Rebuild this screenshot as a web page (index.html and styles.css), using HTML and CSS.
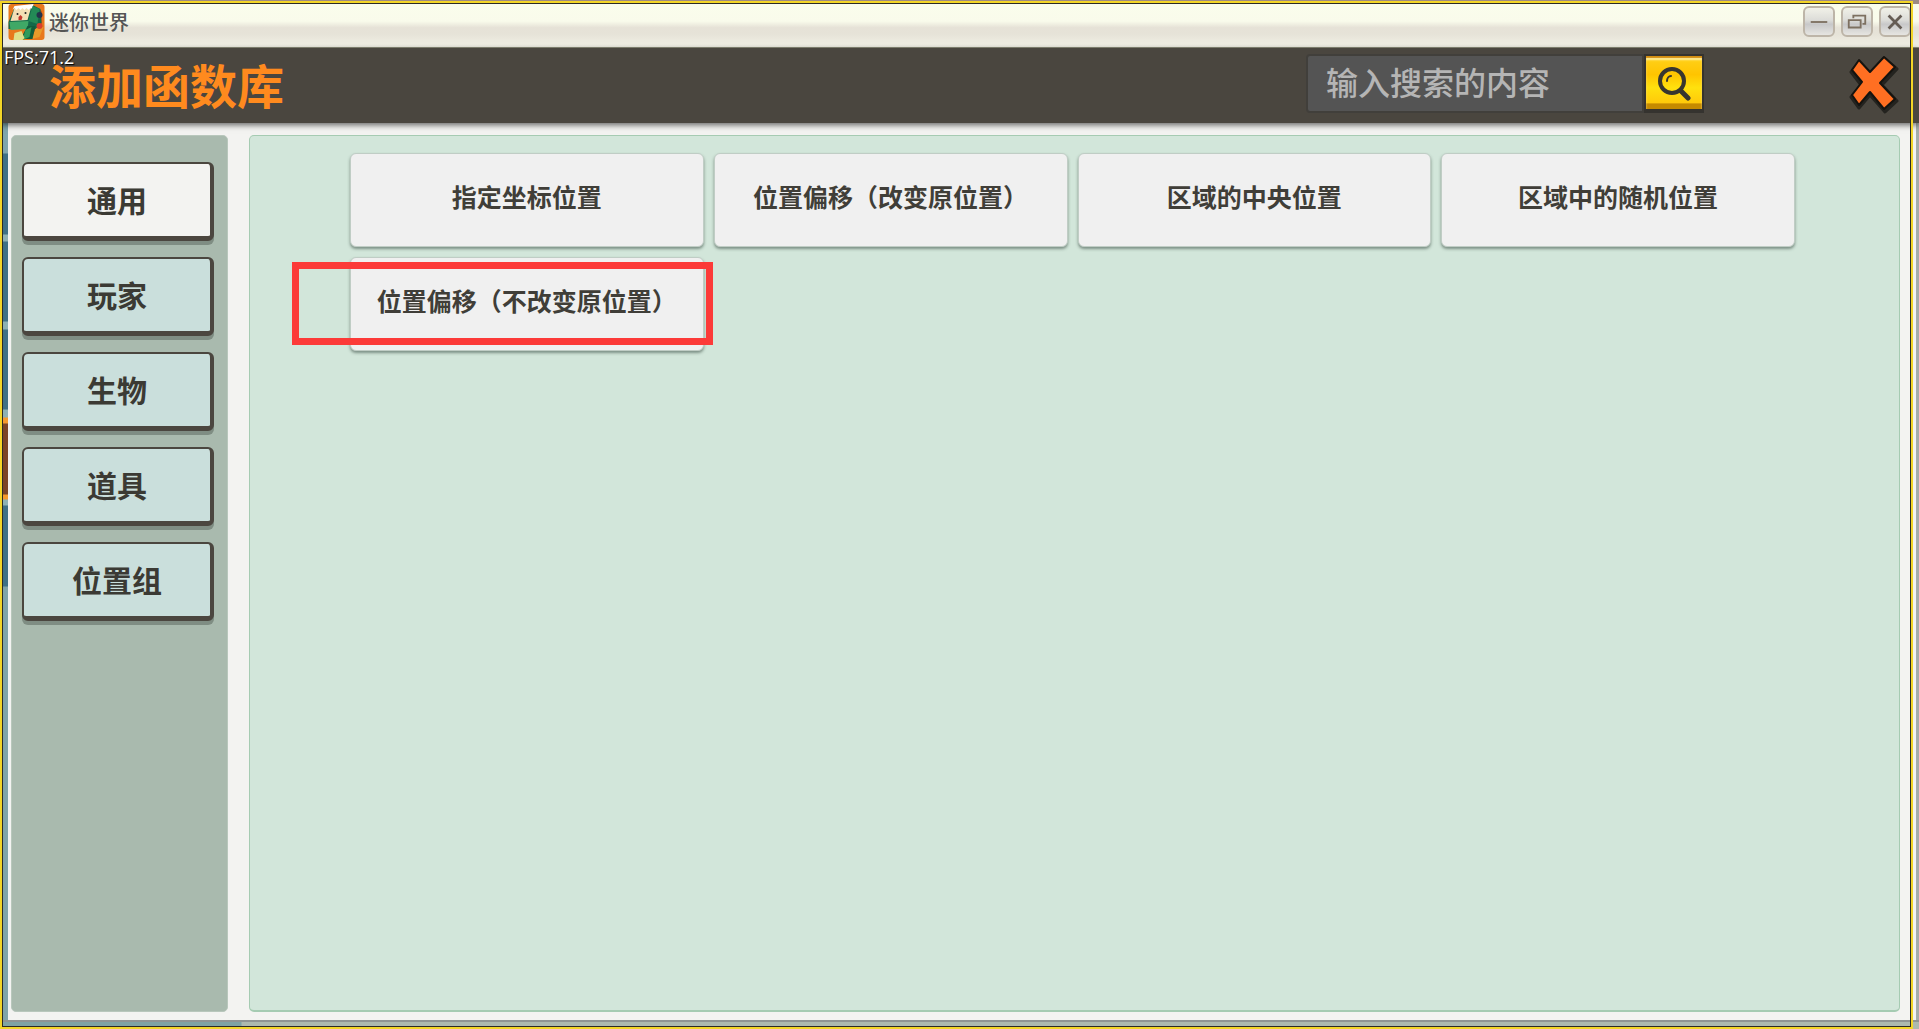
FILE: index.html
```html
<!DOCTYPE html>
<html lang="zh-CN">
<head>
<meta charset="UTF-8" />
<meta name="viewport" content="width=device-width, initial-scale=1.0"/>
<title>迷你世界</title>
<link rel="stylesheet" href="styles.css">
</head>
<body>
<div class="window">
  <div class="titlebar">
    <svg class="app-icon" viewBox="0 0 36 36" aria-hidden="true">
      <rect width="36" height="36" rx="3" fill="#e8781c"/>
      <path d="M24 2l9 5v18l-7 9H13l14-10z" fill="#a8380f"/>
      <path d="M27 24l8-1-4 10-8 2z" fill="#e89a2a"/>
      <path d="M0 18L6 4l18-3 8 4 1 14-6 6H7L0 25z" fill="#14694a"/>
      <path d="M6 4l17-2-4 14-17 1z" fill="#f4dfb4"/>
      <path d="M6 2l19-2-1 5-2-1-2 2-2-2-2 2-2-2-2 2-2-2-2 2-2-2-2 2z" fill="#fff"/>
      <path d="M24 2l7 3-2 15-9-3z" fill="#238a56"/>
      <path d="M1 18l19-1-1 8-17 1z" fill="#3fa866"/>
      <path d="M19 22h8l-3 13H12z" fill="#125c3b"/>
      <path d="M17 26l6-3-2 10-7 3z" fill="#2f9a5b"/>
      <path d="M6 29l7-2 3 7-2 2H5z" fill="#dfe08a"/>
      <circle cx="9" cy="10" r="1" fill="#222"/>
      <circle cx="17" cy="9" r="1" fill="#222"/>
      <path d="M10 13l2-2 2 2-1 3h-3z" fill="#c5352b"/>
      <circle cx="31" cy="11" r="3" fill="#24334a"/>
      <circle cx="31" cy="22" r="3" fill="#d8402c"/>
    </svg>
    <span class="app-name">迷你世界</span>
    <div class="window-buttons">
      <button type="button" aria-label="最小化">
        <svg viewBox="0 0 24 24"><path d="M3 12h18" stroke="#7d7061" stroke-width="2"/></svg>
      </button>
      <button type="button" aria-label="还原">
        <svg viewBox="0 0 24 24" fill="none" stroke="#7d7061" stroke-width="2"><path d="M3 10h13v8H3zM8 8V5h13v9h-3"/></svg>
      </button>
      <button type="button" aria-label="关闭窗口">
        <svg viewBox="0 0 24 24"><path d="M5 5l14 14M19 5L5 19" stroke="#655c54" stroke-width="3"/></svg>
      </button>
    </div>
  </div>

  <header class="header">
    <span class="fps">FPS:71.2</span>
    <h1>添加函数库</h1>
    <form class="search">
      <input type="text" aria-label="搜索" placeholder="输入搜索的内容" />
      <button type="button" aria-label="搜索">
        <svg viewBox="0 0 36 36" fill="none" stroke="#38362f" stroke-linecap="round">
          <circle cx="16" cy="16" r="12" stroke-width="4"/>
          <path d="M25 26l7 7" stroke-width="5"/>
          <path d="M11 16c0-3 2-5 4-5" stroke-width="2"/>
        </svg>
      </button>
    </form>
    <button type="button" class="close" aria-label="关闭">
      <svg viewBox="0 0 50 60">
        <path d="M10 8L21 20L35 4L48 15L33 31L48 47L36 58L21 41L10 54L2 43L12 31L2 18z" fill="#24231f" stroke="#24231f" stroke-width="3" stroke-linejoin="round"/>
        <path d="M10 6L21 18L35 3L46 13L31 29L46 45L35 55L21 38L10 51L3 41L13 28L3 16z" fill="#ff6f22" stroke="#15130f" stroke-width="2" stroke-linejoin="round"/>
      </svg>
    </button>
  </header>

  <div class="body">
    <div class="scene"></div>
    <div class="panel">
      <nav class="sidebar">
        <button type="button" class="tab active">通用</button>
        <button type="button" class="tab">玩家</button>
        <button type="button" class="tab">生物</button>
        <button type="button" class="tab">道具</button>
        <button type="button" class="tab">位置组</button>
      </nav>
      <main class="content">
        <div class="cards">
          <button type="button" class="card">指定坐标位置</button>
          <button type="button" class="card">位置偏移（改变原位置）</button>
          <button type="button" class="card">区域的中央位置</button>
          <button type="button" class="card">区域中的随机位置</button>
          <button type="button" class="card marked">位置偏移（不改变原位置）</button>
        </div>
      </main>
    </div>
  </div>
  <div class="ground"></div>
</div>
<div class="frame"></div>
</body>
</html>
```

FILE: styles.css
```css
* { margin: 0; padding: 0; box-sizing: border-box; }
body, button, input { font-family: "Noto Sans CJK SC", sans-serif; }
button { border: none; cursor: pointer; }

.window {
  display: flex;
  flex-direction: column;
  height: 100vh;
  padding-top: 4px;
  background: #9d8b83;
}

/* Title bar */
.titlebar {
  display: flex;
  align-items: flex-start;
  height: 44px;
  padding: 0 8px;
  background: linear-gradient(#fafdec 0, #f9fbeb 40%, #e6e2d7 55%, #e6e3d8 70%, #f2f1e6 100%);
  border-bottom: 1px solid #8e8f7c;
}
.app-icon { width: 37px; height: 36px; }
.app-name {
  margin-left: 4px;
  color: #555;
  font-size: 20px;
  font-weight: 500;
  line-height: 36px;
}
.window-buttons {
  display: flex;
  gap: 6px;
  margin-left: auto;
  padding-top: 2px;
}
.window-buttons button {
  display: flex;
  align-items: center;
  justify-content: center;
  width: 32px;
  height: 31px;
  background: linear-gradient(#f1f1e8 0, #dcdcd8 45%, #c8c8c9 60%, #e6e5e1 100%);
  border: 2px solid #bdb5a8;
  border-radius: 6px;
}
.window-buttons svg { width: 22px; height: 22px; flex: none; }

/* Header */
.header {
  position: relative;
  z-index: 1;
  display: flex;
  align-items: center;
  height: 75px;
  padding: 0 20px 4px 49px;
  background: #4a463f;
  box-shadow: 0 2px 6px rgba(0, 0, 0, 0.6);
}
.fps {
  position: absolute;
  top: 0;
  left: 4px;
  color: #fff;
  font-family: "Open Sans", sans-serif;
  font-size: 18px;
  font-weight: 500;
  line-height: 18px;
  text-shadow: 1px 1px 1px #000;
}
h1 {
  color: #ff8a1e;
  font-size: 47px;
  font-weight: 700;
  line-height: 48px;
}
.search {
  display: flex;
  margin-left: auto;
  margin-right: 145px;
}
.search input {
  width: 338px;
  height: 59px;
  padding: 0 18px 6px;
  background: #545454;
  border: 2px solid #413f3b;
  border-radius: 4px 0 0 4px;
  color: #bcbcbc;
  font-size: 32px;
  font-weight: 500;
}
.search input::placeholder { color: #b5b5b5; opacity: 1; }
.search button {
  display: flex;
  align-items: center;
  justify-content: center;
  width: 60px;
  height: 59px;
  background: linear-gradient(#ffd21c, #ffc400 35%, #ffe10e 60%, #ffc90a 89%, #c58a00 90%);
  border: 2px solid #35332f;
  border-bottom-width: 4px;
  box-shadow: inset 0 2px 1px #d28c10, inset 0 4px 2px #fff0a0;
}
.search svg { width: 36px; height: 36px; }
.close { width: 50px; height: 60px; background: none; }
.close svg { display: block; }

/* Body */
.body { display: flex; flex: 1; min-height: 0; background: #a5adaa; }
.scene {
  width: 8px;
  background: linear-gradient(#7fa5ac 0 30px, #3f7085 31px 111px, #8db0b3 112px 118px, #3f7085 119px 198px, #8db0b3 199px 206px, #3f7085 207px 286px, #8db0b3 287px 294px, #f59a2d 295px 300px, #7b4425 301px 371px, #f59a2d 372px 376px, #8db0b3 377px 382px, #3f7085 383px 463px, #80a4a8 464px);
}
.panel {
  display: flex;
  flex: 1;
  gap: 21px;
  margin-right: 3px;
  padding: 12px 16px 8px 3px;
  background: #f3f3f1;
}
.sidebar {
  display: flex;
  flex-direction: column;
  gap: 16px;
  width: 217px;
  padding: 26px 13px 0 10px;
  background: #a9baae;
  border: 1px solid #b8c7bc;
  border-radius: 5px;
}
.tab {
  height: 79px;
  padding-bottom: 2px;
  background: #cadfdc;
  border: 2px solid #4b463f;
  border-right-width: 4px;
  border-bottom-width: 5px;
  border-radius: 6px;
  box-shadow: 0 4px 0 #7f8d83;
  color: #3b3a34;
  font-size: 30px;
  font-weight: 700;
  line-height: 40px;
}
.tab.active { background: #f3f3f1; }
.content {
  flex: 1;
  padding: 17px 104px 0 100px;
  background: #d2e6da;
  border: 1px solid #a5cbb2;
  border-bottom-width: 2px;
  border-radius: 5px;
}
.cards { display: grid; grid-template-columns: repeat(4, 1fr); gap: 10px; }
.card {
  position: relative;
  height: 94px;
  padding-bottom: 8px;
  background: #f0f0f0;
  border: 1px solid #c0cdc5;
  border-radius: 6px;
  box-shadow: 0 2px 3px rgba(40, 60, 50, 0.5);
  color: #403e38;
  font-size: 25px;
  font-weight: 700;
  white-space: nowrap;
}
/* Red highlight round the marked card */
.card.marked::after {
  content: "";
  position: absolute;
  top: 4px;
  left: -59px;
  right: -10px;
  bottom: 5px;
  border: 7px solid #fc3a38;
}

.ground {
  height: 9px;
  background: linear-gradient(90deg, #7fa3a3 241px, #adb9ae 242px);
  border-top: 2px solid #8f9492;
}

/* Yellow capture frame over the window */
.frame {
  position: absolute;
  z-index: 2;
  top: 1px;
  left: 0;
  right: 6px;
  bottom: 0;
  border: 2px solid #f3d527;
  outline: 1px solid #2b2a26;
  outline-offset: -3px;
  pointer-events: none;
}
```
